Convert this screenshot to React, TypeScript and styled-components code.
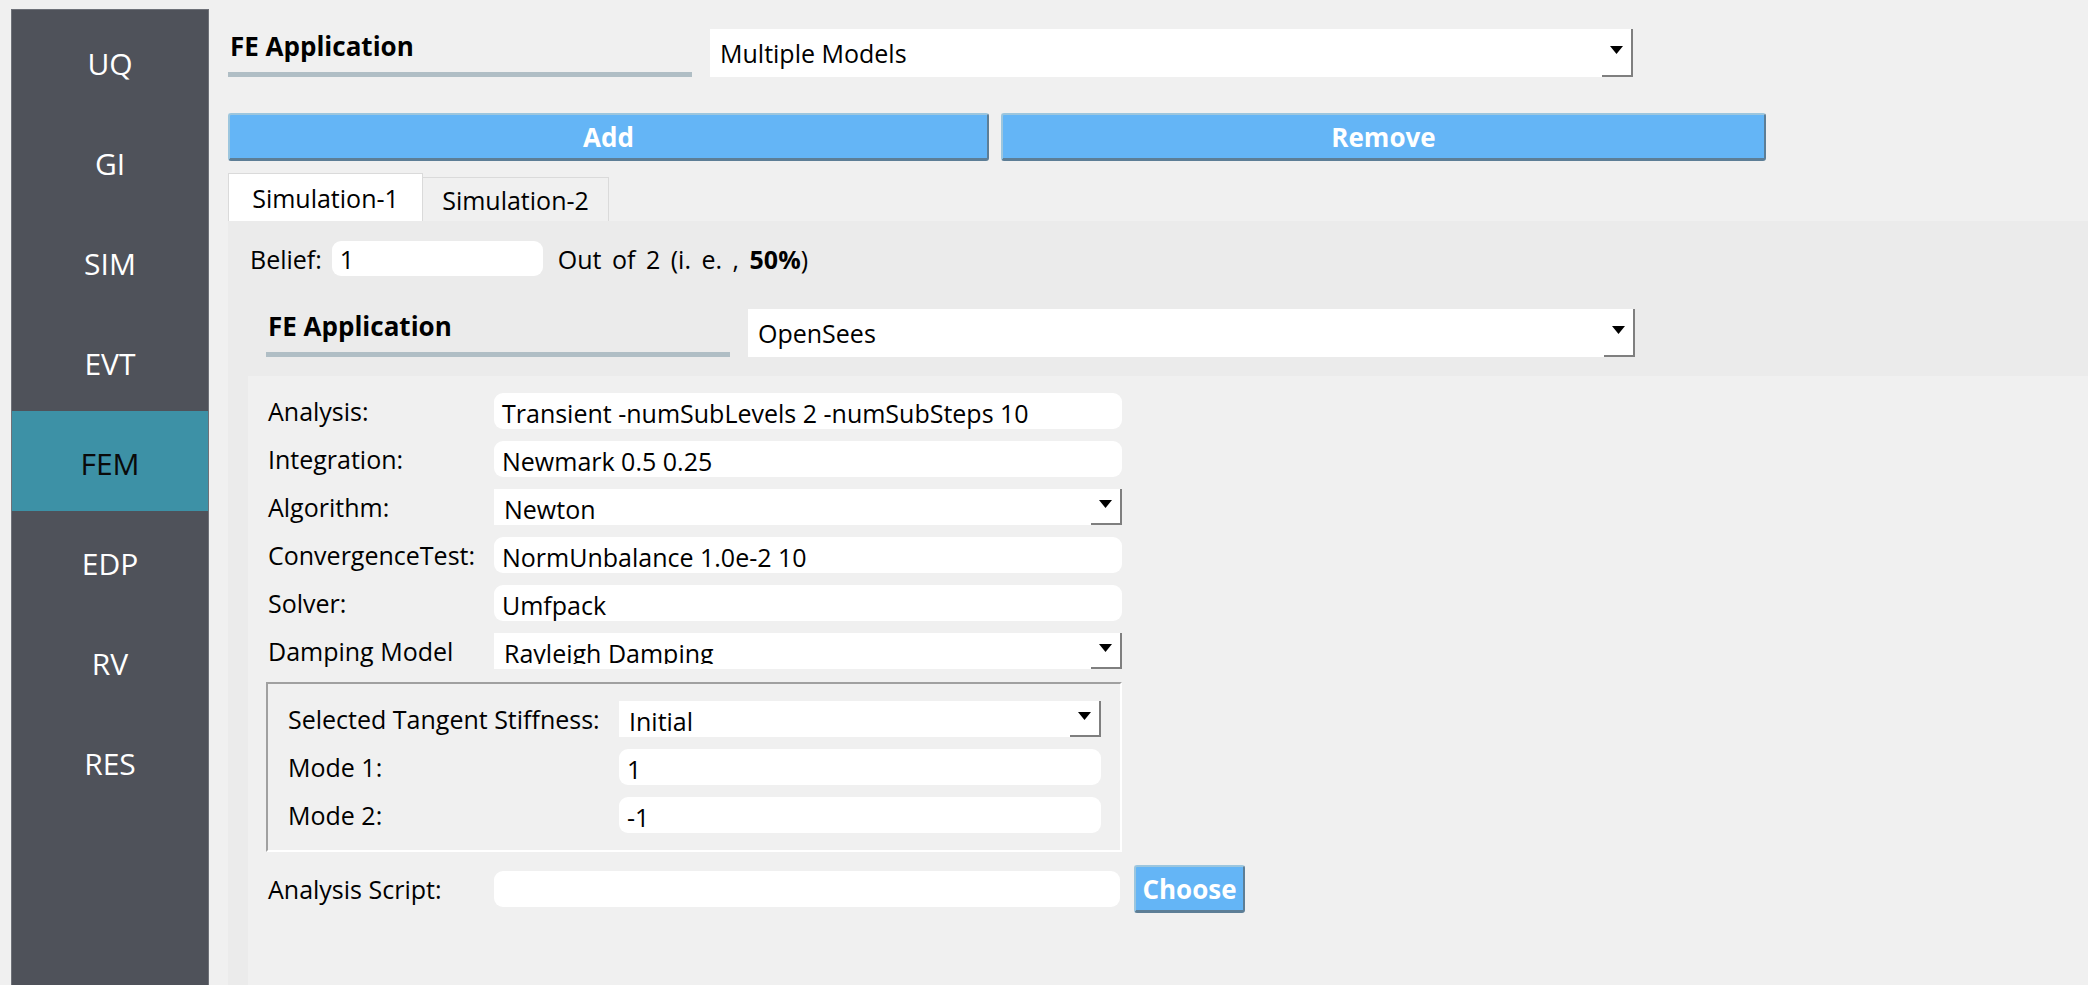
import React from 'react';
import styled, { createGlobalStyle } from 'styled-components';

const GlobalStyle = createGlobalStyle`
  html, body { margin: 0; padding: 0; background: #f0f0f0; }
  body { font-family: "Open Sans", "Noto Sans", sans-serif; color: #000; }
  * { box-sizing: border-box; }
`;

const Shell = styled.div`
  display: flex;
  width: 2088px;
  height: 985px;
  overflow: hidden;
  background: #f0f0f0;
`;

const Sidebar = styled.nav`
  flex: none;
  width: 198px;
  margin: 9px 0 0 11px;
  padding-top: 1px;
  background: #4f525a;
  border: 1px solid #6e7178;
  border-bottom: none;
  display: flex;
  flex-direction: column;
`;

const NavItem = styled.div<{ $active?: boolean }>`
  height: 100px;
  padding-top: 5px;
  display: flex;
  align-items: center;
  justify-content: center;
  font-size: 30px;
  color: ${(p) => (p.$active ? '#0a0a0a' : '#ffffff')};
  background: ${(p) => (p.$active ? '#3d91a6' : 'transparent')};
`;

const Main = styled.main`
  flex: 1;
  min-width: 0;
  padding: 29px 0 0 19px;
  display: flex;
  flex-direction: column;
`;

const HeaderRow = styled.div<{ $indent?: number }>`
  display: flex;
  height: 48px;
  gap: 18px;
  padding-left: ${(p) => p.$indent ?? 0}px;
`;

const TitleBlock = styled.div`
  width: 464px;
  flex: none;
  display: flex;
  flex-direction: column;
  justify-content: space-between;
`;

const Title = styled.div`
  font-weight: 700;
  font-size: 26px;
  line-height: 34px;
  padding-left: 2px;
`;

const TitleBar = styled.div`
  height: 5px;
  background: #b0bec5;
`;

const Combo = styled.div<{ $width: number; $height: number }>`
  width: ${(p) => p.$width}px;
  height: ${(p) => p.$height}px;
  flex: none;
  display: flex;
  background: #ffffff;
`;

const ComboText = styled.div<{ $top: number; $clip?: number }>`
  flex: 1;
  align-self: flex-start;
  ${(p) => (p.$clip ? `height: ${p.$clip}px; overflow: hidden;` : '')}
  padding: ${(p) => p.$top}px 0 0 10px;
  font-size: 25px;
  line-height: 30px;
  white-space: nowrap;
`;

const DropButton = styled.div`
  width: 31px;
  flex: none;
  border-right: 2px solid #7f7f7f;
  border-bottom: 2px solid #7f7f7f;
  display: flex;
  align-items: center;
  justify-content: center;
  padding-bottom: 4px;
`;

const Arrow = () => (
  <svg width="13" height="8" viewBox="0 0 13 8">
    <polygon points="0,0 13,0 6.5,8" fill="#000" />
  </svg>
);

const ButtonRow = styled.div`
  display: grid;
  grid-template-columns: 761px 765px;
  gap: 12px;
  margin-top: 36px;
  height: 48px;
`;

const ActionButton = styled.button<{ $width?: number }>`
  width: ${(p) => (p.$width ? `${p.$width}px` : '100%')};
  height: 48px;
  background: #64b5f6;
  color: #ffffff;
  font-family: inherit;
  font-weight: 700;
  font-size: 26px;
  border: 2px solid;
  border-color: #9cc6de #5d7e96 #5d7e96 #9cc6de;
  border-bottom-width: 3px;
  border-radius: 3px;
  padding: 0;
  flex: none;
`;

const TabBar = styled.div`
  display: flex;
  align-items: flex-end;
  margin-top: 12px;
  height: 48px;
`;

const Tab = styled.div<{ $active?: boolean; $width: number }>`
  width: ${(p) => p.$width}px;
  height: ${(p) => (p.$active ? 48 : 44)}px;
  display: flex;
  align-items: center;
  justify-content: center;
  font-size: 25px;
  background: ${(p) => (p.$active ? '#ffffff' : '#f0f0f0')};
  border: 1px solid #dadada;
  border-bottom: none;
  ${(p) => (p.$active ? '' : 'border-left: none;')}
`;

const Pane = styled.section`
  flex: 1;
  background: #ebebeb;
  padding-top: 20px;
  display: flex;
  flex-direction: column;
`;

const BeliefRow = styled.div`
  display: flex;
  align-items: center;
  height: 35px;
  padding-left: 22px;
  font-size: 25px;
`;

const Ratio = styled.span`
  word-spacing: 4px;
`;

const TextField = styled.div<{ $width: number; $height?: number }>`
  width: ${(p) => p.$width}px;
  height: ${(p) => p.$height ?? 36}px;
  flex: none;
  background: #ffffff;
  border-radius: 9px;
  padding: 5px 0 0 8px;
  font-size: 25px;
  line-height: 30px;
  white-space: nowrap;
  overflow: hidden;
`;

const BeliefField = styled(TextField)`
  margin: 0 15px 0 10px;
  padding-top: 3px;
`;

const ModelBox = styled.div`
  flex: 1;
  margin: 33px 0 0 20px;
  display: flex;
  flex-direction: column;
`;

const Panel = styled.div`
  flex: 1;
  margin-top: 19px;
  background: #f0f0f0;
  padding: 17px 0 0 20px;
`;

const FormGrid = styled.div<{ $label: number }>`
  display: grid;
  grid-template-columns: ${(p) => p.$label}px auto;
  grid-auto-rows: 36px;
  row-gap: 12px;
  justify-content: start;
`;

const Label = styled.div`
  font-size: 25px;
  display: flex;
  align-items: center;
  white-space: nowrap;
`;

const GroupBox = styled.div`
  width: 856px;
  margin: 13px 0 0 -2px;
  border: 2px solid;
  border-color: #a0a0a0 #ffffff #ffffff #a0a0a0;
  padding: 17px 17px 17px 20px;
`;

const ScriptRow = styled.div`
  display: flex;
  align-items: center;
  margin-top: 13px;
  height: 48px;
`;

const ScriptLabel = styled(Label)`
  width: 226px;
`;

const ChooseButton = styled(ActionButton)`
  margin-left: 14px;
`;

type ComboProps = { value: string; width: number; height?: number; clip?: boolean };

const ComboBox = ({ value, width, height = 36, clip = false }: ComboProps) => (
  <Combo $width={width} $height={height}>
    <ComboText $top={height === 36 ? 5 : 9} $clip={clip ? 31 : undefined}>
      {value}
    </ComboText>
    <DropButton>
      <Arrow />
    </DropButton>
  </Combo>
);

const navItems = ['UQ', 'GI', 'SIM', 'EVT', 'FEM', 'EDP', 'RV', 'RES'];

export default function App() {
  return (
    <>
      <GlobalStyle />
      <Shell>
        <Sidebar>
          {navItems.map((n) => (
            <NavItem key={n} $active={n === 'FEM'}>
              {n}
            </NavItem>
          ))}
        </Sidebar>
        <Main>
          <HeaderRow>
            <TitleBlock>
              <Title>FE Application</Title>
              <TitleBar />
            </TitleBlock>
            <ComboBox value="Multiple Models" width={923} height={48} />
          </HeaderRow>
          <ButtonRow>
            <ActionButton>Add</ActionButton>
            <ActionButton>Remove</ActionButton>
          </ButtonRow>
          <TabBar>
            <Tab $active $width={195}>Simulation-1</Tab>
            <Tab $width={186}>Simulation-2</Tab>
          </TabBar>
          <Pane>
            <BeliefRow>
              <span>Belief:</span>
              <BeliefField $width={211} $height={35}>1</BeliefField>
              <Ratio>
                Out of 2 (i. e. , <b>50%</b>)
              </Ratio>
            </BeliefRow>
            <ModelBox>
              <HeaderRow $indent={18}>
                <TitleBlock>
                  <Title>FE Application</Title>
                  <TitleBar />
                </TitleBlock>
                <ComboBox value="OpenSees" width={887} height={48} />
              </HeaderRow>
              <Panel>
                <FormGrid $label={226}>
                  <Label>Analysis:</Label>
                  <TextField $width={628}>Transient -numSubLevels 2 -numSubSteps 10</TextField>
                  <Label>Integration:</Label>
                  <TextField $width={628}>Newmark 0.5 0.25</TextField>
                  <Label>Algorithm:</Label>
                  <ComboBox value="Newton" width={628} />
                  <Label>ConvergenceTest:</Label>
                  <TextField $width={628}>NormUnbalance 1.0e-2 10</TextField>
                  <Label>Solver:</Label>
                  <TextField $width={628}>Umfpack</TextField>
                  <Label>Damping Model</Label>
                  <ComboBox value="Rayleigh Damping" width={628} clip />
                </FormGrid>
                <GroupBox>
                  <FormGrid $label={331}>
                    <Label>Selected Tangent Stiffness:</Label>
                    <ComboBox value="Initial" width={482} />
                    <Label>Mode 1:</Label>
                    <TextField $width={482}>1</TextField>
                    <Label>Mode 2:</Label>
                    <TextField $width={482}>-1</TextField>
                  </FormGrid>
                </GroupBox>
                <ScriptRow>
                  <ScriptLabel>Analysis Script:</ScriptLabel>
                  <TextField $width={626} />
                  <ChooseButton $width={111}>Choose</ChooseButton>
                </ScriptRow>
              </Panel>
            </ModelBox>
          </Pane>
        </Main>
      </Shell>
    </>
  );
}
